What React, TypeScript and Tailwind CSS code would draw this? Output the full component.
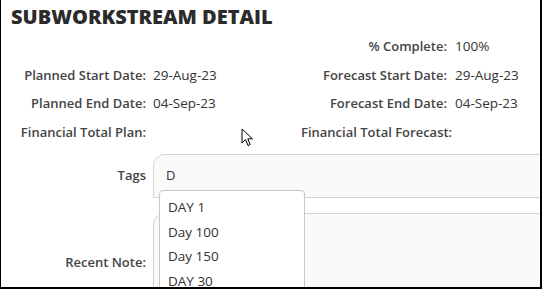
import React from 'react';

const rows = [
  { l1: '', v1: '', l2: '% Complete:', v2: '100%' },
  { l1: 'Planned Start Date:', v1: '29-Aug-23', l2: 'Forecast Start Date:', v2: '29-Aug-23' },
  { l1: 'Planned End Date:', v1: '04-Sep-23', l2: 'Forecast End Date:', v2: '04-Sep-23' },
  { l1: 'Financial Total Plan:', v1: '', l2: 'Financial Total Forecast:', v2: '' },
];

const tagOptions = ['DAY 1', 'Day 100', 'Day 150', 'DAY 30'];

function Cursor() {
  return (
    <svg width="14" height="20" viewBox="0 0 14 20" className="absolute left-[240px] top-[128px]">
      <path d="M1 1 L1 15 L4.5 11.5 L7 17.5 L9.2 16.5 L6.8 10.8 L11.5 10.8 Z" fill="#fff" stroke="#000" strokeWidth="1" strokeLinejoin="round" />
    </svg>
  );
}

export default function App() {
  return (
    <div className="relative w-[542px] h-[289px] overflow-hidden bg-white border-l border-r-2 border-b-2 border-black text-[#333] font-['Open_Sans','Noto_Sans',sans-serif]">
      <h1 className="pl-[10px] pt-[4px] text-[20px] leading-[26px] font-extrabold text-[#2b2b2b]">SUBWORKSTREAM DETAIL</h1>

      <div className="mt-[2px] grid grid-cols-[145px_141px_146px_1fr] gap-x-[7px] text-[13px] leading-[28.5px]">
        {rows.map((r, i) => (
          <React.Fragment key={i}>
            <div className="text-right text-[13px] font-semibold text-[#444] whitespace-nowrap">{r.l1}</div>
            <div className="text-[13.5px]">{r.v1}</div>
            <div className="text-right text-[13px] font-semibold text-[#444] whitespace-nowrap">{r.l2}</div>
            <div className="pl-[1px] text-[13.5px]">{r.v2}</div>
          </React.Fragment>
        ))}
      </div>

      <div className="mt-[8px] flex items-center">
        <div className="w-[145px] shrink-0 text-right text-[13px] font-semibold text-[#444]">Tags</div>
        <div className="ml-[7px] w-[420px] shrink-0 h-[44px] rounded-tl-[12px] border border-[#d4d4d4] bg-[#fafafa] flex items-center pl-[12px] text-[13px]">
          D
        </div>
      </div>

      <div className="mt-[15px] flex">
        <div className="w-[145px] shrink-0 pt-[40px] text-right text-[13px] font-semibold text-[#444]">Recent Note:</div>
        <div className="ml-[7px] w-[420px] shrink-0 h-[80px] rounded-tl-[12px] border border-[#d4d4d4] bg-[#fafafa]" />
      </div>

      <ul className="absolute left-[158px] top-[190px] w-[146px] h-[110px] bg-white border border-[#c8c8c8] rounded-t-[4px] pt-[4px] text-[13.5px] text-[#333]">
        {tagOptions.map(o => (
          <li key={o} className="pl-[8px] h-[24.5px] leading-[24.5px]">{o}</li>
        ))}
      </ul>

      <Cursor />
    </div>
  );
}
